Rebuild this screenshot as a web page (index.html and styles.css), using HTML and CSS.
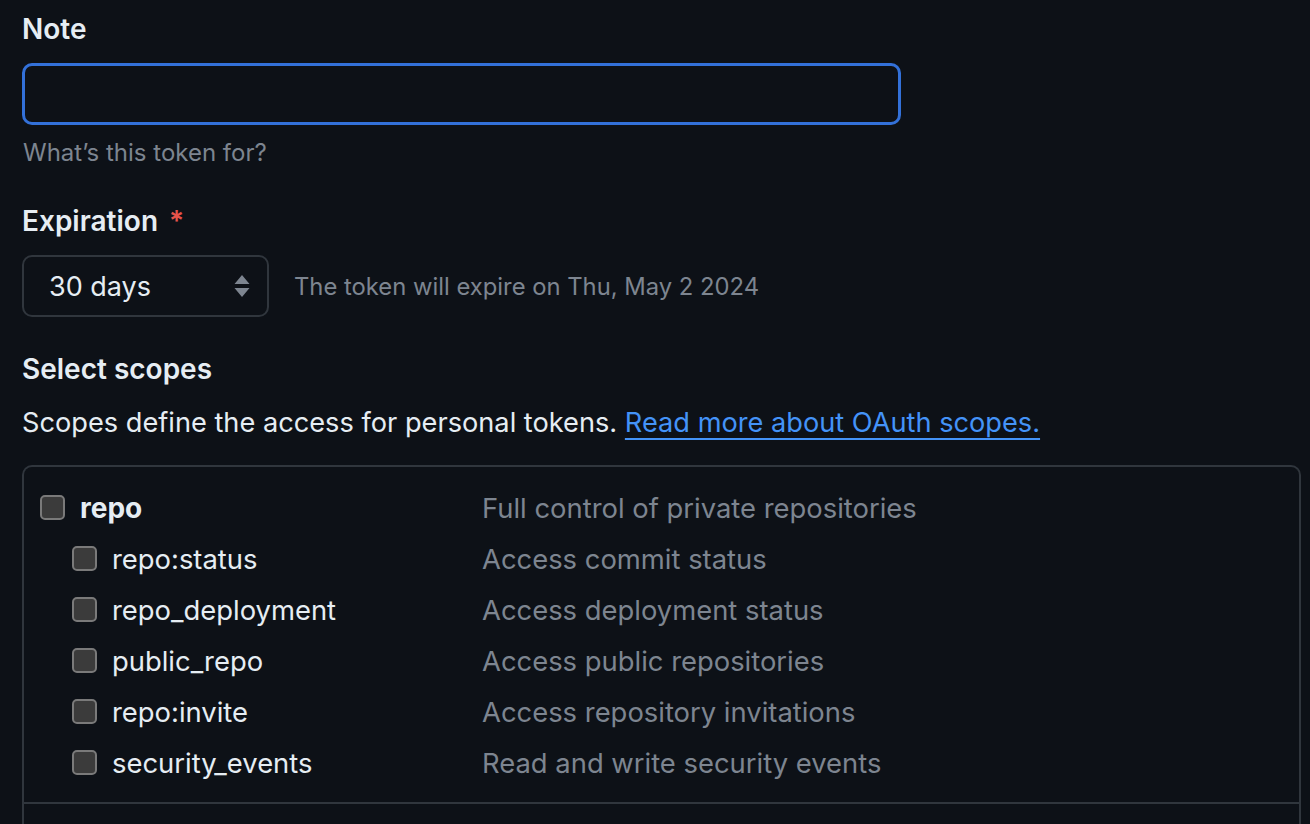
FILE: index.html
```html
<!DOCTYPE html>
<html lang="en">
<head>
<meta charset="utf-8">
<title>New personal access token</title>
<link rel="stylesheet" href="styles.css">
</head>
<body>
<main class="form">
  <div class="label">Note</div>
  <div class="note-input"></div>
  <p class="note">What’s this token for?</p>

  <div class="label label-exp">Expiration <span class="req">*</span></div>
  <div class="exp-row">
    <div class="select">
      <span>30 days</span>
      <svg class="arrows" width="16" height="22" viewBox="0 0 16 22"><path d="M8 0 L15.5 9 H0.5 Z M0.5 13 H15.5 L8 22 Z" fill="#7d8590"/></svg>
    </div>
    <span class="exp-note">The token will expire on Thu, May 2 2024</span>
  </div>

  <div class="label label-scopes">Select scopes</div>
  <p class="scopes-desc">Scopes define the access for personal tokens. <a href="#">Read more about OAuth scopes.</a></p>

  <div class="scope-box">
    <div class="scope-group">
      <div class="row top">
        <div class="name"><span class="cb"></span><strong>repo</strong></div>
        <div class="desc">Full control of private repositories</div>
      </div>
      <div class="row child">
        <div class="name"><span class="cb"></span>repo:status</div>
        <div class="desc">Access commit status</div>
      </div>
      <div class="row child">
        <div class="name"><span class="cb"></span>repo_deployment</div>
        <div class="desc">Access deployment status</div>
      </div>
      <div class="row child">
        <div class="name"><span class="cb"></span>public_repo</div>
        <div class="desc">Access public repositories</div>
      </div>
      <div class="row child">
        <div class="name"><span class="cb"></span>repo:invite</div>
        <div class="desc">Access repository invitations</div>
      </div>
      <div class="row child">
        <div class="name"><span class="cb"></span>security_events</div>
        <div class="desc">Read and write security events</div>
      </div>
    </div>
    <div class="scope-group next"></div>
  </div>
</main>
</body>
</html>
```

FILE: styles.css
```css
html, body {
  margin: 0;
  padding: 0;
  background: #0d1117;
  overflow: hidden;
  height: 824px;
}
body {
  font-family: Inter, "Noto Sans", "Liberation Sans", sans-serif;
  color: #e6edf3;
}
.form {
  padding: 14px 9px 0 22px;
}
.label {
  font-size: 28px;
  font-weight: 600;
  line-height: 30px;
  color: #e6edf3;
}
.note-input {
  margin-top: 19px;
  width: 873px;
  height: 56px;
  border: 3px solid #3371d9;
  border-radius: 10px;
  background: #0d1117;
}
.note {
  margin: 14px 0 0 1px;
  font-size: 24px;
  line-height: 28px;
  color: #7d8590;
}
.label-exp {
  margin-top: 39px;
}
.req {
  color: #e5534b;
  margin-left: 4px;
}
.exp-row {
  margin-top: 19px;
  display: flex;
  align-items: center;
}
.select {
  box-sizing: border-box;
  width: 247px;
  height: 62px;
  border: 2px solid #30363d;
  border-radius: 10px;
  display: flex;
  align-items: center;
  justify-content: space-between;
  padding: 0 17px 0 25px;
  font-size: 27px;
  color: #e6edf3;
}
.arrows {
  display: block;
}
.exp-note {
  margin-left: 25px;
  font-size: 23.8px;
  color: #7d8590;
}
.label-scopes {
  margin-top: 37px;
}
.scopes-desc {
  margin: 23px 0 0;
  font-size: 27.2px;
  line-height: 32px;
  color: #e6edf3;
}
.scopes-desc a {
  color: #4493f8;
  text-decoration: underline;
  text-decoration-thickness: 2px;
  text-underline-offset: 6px;
}
.scope-box {
  margin-top: 26px;
  border: 2px solid #30363d;
  border-bottom: none;
  border-radius: 10px 10px 0 0;
  height: 400px;
}
.scope-group {
  padding: 15px 0 14px 16px;
}
.scope-group.next {
  border-top: 2px solid #30363d;
}
.row {
  display: flex;
  align-items: center;
  height: 51px;
  font-size: 27.4px;
}
.name {
  box-sizing: border-box;
  width: 442px;
  display: flex;
  align-items: center;
  gap: 15px;
  color: #e6edf3;
}
.row.child .name {
  padding-left: 32px;
}
.name strong {
  font-weight: 700;
  font-size: 28px;
}
.cb {
  box-sizing: border-box;
  width: 25px;
  height: 25px;
  border: 2px solid #7a7a7a;
  border-radius: 5px;
  background: #3b3b3b;
  flex: none;
}
.desc {
  color: #7d8590;
}
```
